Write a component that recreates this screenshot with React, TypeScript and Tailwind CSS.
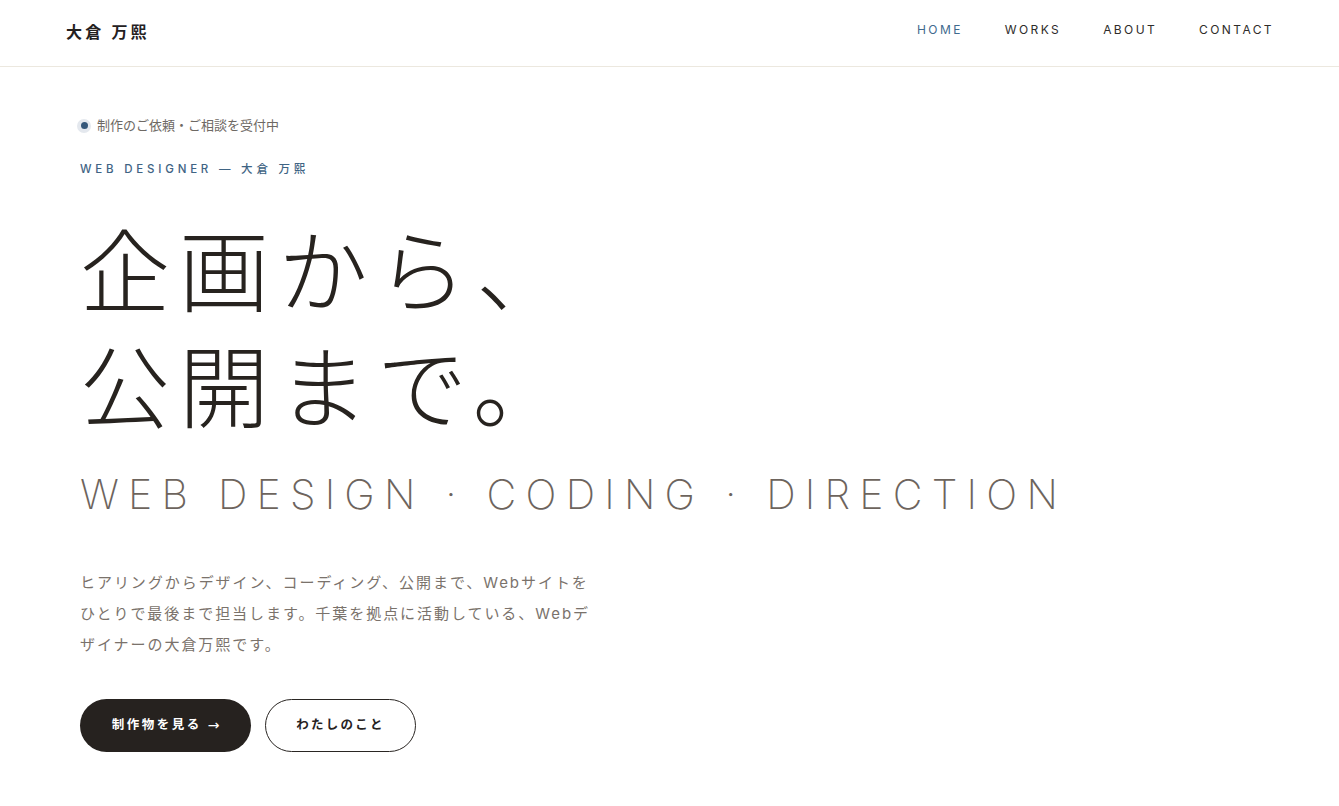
import React from 'react';

const navItems = ['HOME', 'WORKS', 'ABOUT', 'CONTACT'];

const jp = "font-['Inter','Noto_Sans_CJK_JP',sans-serif]";

const Header = () => {
  return (
    <header className="flex h-[67px] items-center justify-between border-b border-[#ece8df] pl-[66px] pr-[65px]">
      <div className={`${jp} -mt-[2px] text-[16px] font-bold tracking-[0.2em] text-[#24211f]`}>大倉&nbsp;万熙</div>
      <nav className="-mt-[6px] flex items-center gap-[42px]">
        {navItems.map((item, i) => (
          <a
            key={item}
            href="#"
            className={`font-['Inter',sans-serif] text-[12px] font-normal tracking-[0.2em] ${
              i === 0 ? 'text-[#3f6a8e]' : 'text-[#2e2c2a]'
            }`}
          >
            {item}
          </a>
        ))}
      </nav>
    </header>
  );
};

const Hero = () => {
  return (
    <section className={`${jp} pl-[80px] pt-[49px]`}>
      <div className="-ml-[3px] flex items-center gap-[6px]">
        <span className="flex h-[14px] w-[14px] items-center justify-center rounded-full bg-[#e4e8ee]">
          <span className="h-[7px] w-[7px] rounded-full bg-[#35577a]" />
        </span>
        <span className="text-[13px] text-[#6e6964]">制作のご依頼・ご相談を受付中</span>
      </div>
      <p className="mt-[25px] text-[11.5px] font-medium tracking-[0.33em] text-[#3f6484]">
        WEB DESIGNER — 大倉 万熙
      </p>

      <h1 className="mt-[37px] text-[90px] font-light leading-[116px] tracking-[0.1em] text-[#27231f]">
        企画から、
        <br />
        公開まで。
      </h1>

      <p className="mt-[27px] font-['Inter',sans-serif] text-[41px] font-extralight leading-none tracking-[0.225em] text-[#6d645d]">
        WEB DESIGN · CODING · DIRECTION
      </p>

      <p className="mt-[52px] w-[518px] text-[15px] leading-[31px] tracking-[0.13em] text-[#7a726b]">
        ヒアリングからデザイン、コーディング、公開まで、Webサイトをひとりで最後まで担当します。千葉を拠点に活動している、Webデザイナーの大倉万熙です。
      </p>

      <div className="mt-[39px] flex gap-[14px]">
        <a
          href="#"
          className="flex h-[53px] w-[171px] items-center justify-center rounded-full bg-[#26221f] text-[12.5px] font-bold tracking-[0.2em] text-white"
        >
          制作物を見る
          <span className="ml-[6px] font-['DejaVu_Sans',sans-serif] text-[14px] font-normal tracking-normal">→</span>
        </a>
        <a
          href="#"
          className="flex h-[53px] w-[151px] items-center justify-center rounded-full border border-[#2a2623] text-[12.5px] font-bold tracking-[0.18em] text-[#27231f]"
        >
          わたしのこと
        </a>
      </div>
    </section>
  );
};

export default function App() {
  return (
    <div className="min-h-screen bg-white">
      <Header />
      <Hero />
    </div>
  );
}
